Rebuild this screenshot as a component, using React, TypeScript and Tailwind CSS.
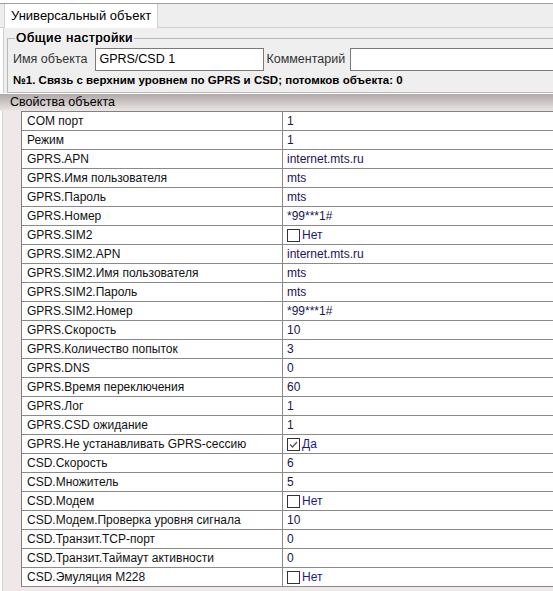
import React from "react";

type Row = { k: string; v: string; check?: boolean };

const rows: Row[] = [
  { k: "COM порт", v: "1" },
  { k: "Режим", v: "1" },
  { k: "GPRS.APN", v: "internet.mts.ru" },
  { k: "GPRS.Имя пользователя", v: "mts" },
  { k: "GPRS.Пароль", v: "mts" },
  { k: "GPRS.Номер", v: "*99***1#" },
  { k: "GPRS.SIM2", v: "Нет", check: false },
  { k: "GPRS.SIM2.APN", v: "internet.mts.ru" },
  { k: "GPRS.SIM2.Имя пользователя", v: "mts" },
  { k: "GPRS.SIM2.Пароль", v: "mts" },
  { k: "GPRS.SIM2.Номер", v: "*99***1#" },
  { k: "GPRS.Скорость", v: "10" },
  { k: "GPRS.Количество попыток", v: "3" },
  { k: "GPRS.DNS", v: "0" },
  { k: "GPRS.Время переключения", v: "60" },
  { k: "GPRS.Лог", v: "1" },
  { k: "GPRS.CSD ожидание", v: "1" },
  { k: "GPRS.Не устанавливать GPRS-сессию", v: "Да", check: true },
  { k: "CSD.Скорость", v: "6" },
  { k: "CSD.Множитель", v: "5" },
  { k: "CSD.Модем", v: "Нет", check: false },
  { k: "CSD.Модем.Проверка уровня сигнала", v: "10" },
  { k: "CSD.Транзит.TCP-порт", v: "0" },
  { k: "CSD.Транзит.Таймаут активности", v: "0" },
  { k: "CSD.Эмуляция M228", v: "Нет", check: false },
];

function Box({ checked }: { checked: boolean }) {
  return (
    <span className="inline-flex h-[13px] w-[13px] items-center justify-center border border-[#333] bg-white">
      {checked && (
        <svg width="11" height="11" viewBox="0 0 11 11">
          <path d="M2 5.5 L4.5 8 L9 3" fill="none" stroke="#555" strokeWidth="1.3" />
        </svg>
      )}
    </span>
  );
}

export default function App() {
  return (
    <div
      className="h-[591px] w-[553px] overflow-hidden bg-white text-[12px] text-black"
      style={{ fontFamily: '"Liberation Sans", Arial, sans-serif' }}
    >
      <div className="w-[620px] pt-[3px]">
        {/* tab strip */}
        <div className="flex h-[25px] border-t border-b border-t-[#a0a0a0] border-b-[#d0d0d0] bg-[#eeeeee]">
          <div className="ml-[4px] mb-[-1px] flex w-[154px] items-center border-x border-[#d0d0d0] bg-white pl-[6px] text-[13px]">
            Универсальный объект
          </div>
        </div>

        {/* general settings */}
        <div className="ml-[3px] border-l border-[#d0d0d0] bg-[#efefef] pt-[3px]">
          <fieldset className="ml-[3px] border border-[#b8b8b8] pl-[5px] pb-[4px]">
            <legend className="ml-[2px] px-[1px] text-[13px] leading-[14px] tracking-[0.6px] text-black [text-shadow:0.3px_0_0_#000]">
              Общие настройки
            </legend>
            <div className="flex items-center pt-[3px] text-[12.5px]">
              <span className="text-[#333]">Имя объекта</span>
              <div className="ml-[8px] flex h-[23px] w-[169px] items-center border border-[#7a7a7a] bg-white pl-[3px]">
                GPRS/CSD 1
              </div>
              <span className="ml-[2px] text-[#333]">Комментарий</span>
              <div className="ml-[5px] h-[23px] w-[260px] border border-[#7a7a7a] bg-white" />
            </div>
            <div className="mt-[2px] text-[11.5px] font-bold leading-[15px]">
              №1. Связь с верхним уровнем по GPRS и CSD; потомков объекта: 0
            </div>
          </fieldset>
        </div>

        {/* object properties */}
        <div className="mt-px flex h-[17px] items-center bg-gradient-to-b from-[#b1a8a8] to-[#ece6e6] pl-[10px] text-[12.5px]">
          Свойства объекта
        </div>
        <div className="ml-[2px] h-[480px] border-l border-[#d8d2d2] bg-[#eee8e8] pl-[18px]">
          <div className="border-t border-l border-[#808080] bg-white">
            {rows.map((r) => (
              <div key={r.k} className="grid h-[19px] grid-cols-[261px_1fr] border-b border-[#8a8a8a]">
                <div className="flex items-center border-r border-[#8a8a8a] pl-[5px] text-[#111]">{r.k}</div>
                <div className="flex items-center pl-[4px] text-[#1a1450]">
                  {r.check === undefined ? (
                    r.v
                  ) : (
                    <span className="flex items-center gap-[2px]">
                      <Box checked={r.check} />
                      <span className="text-[#1a1a80]">{r.v}</span>
                    </span>
                  )}
                </div>
              </div>
            ))}
          </div>
        </div>
      </div>
    </div>
  );
}
